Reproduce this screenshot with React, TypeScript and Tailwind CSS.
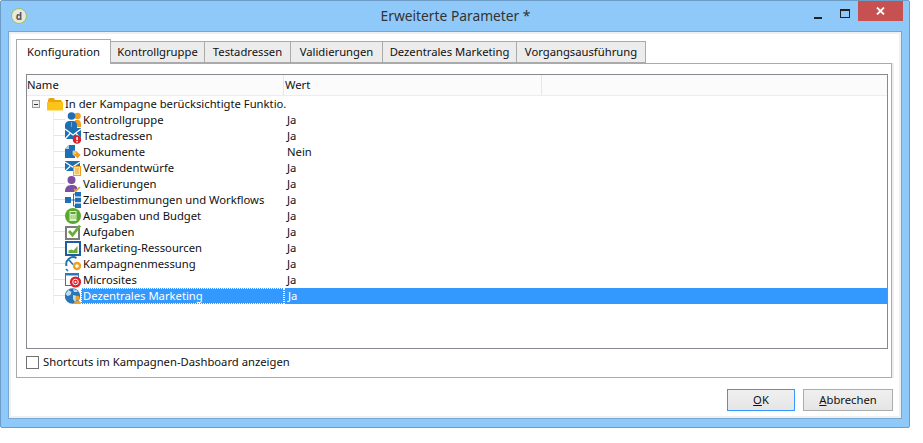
const rows = [
  { name: "Kontrollgruppe", value: "Ja", icon: "group" },
  { name: "Testadressen", value: "Ja", icon: "test" },
  { name: "Dokumente", value: "Nein", icon: "doc" },
  { name: "Versandentwürfe", value: "Ja", icon: "draft" },
  { name: "Validierungen", value: "Ja", icon: "valid" },
  { name: "Zielbestimmungen und Workflows", value: "Ja", icon: "flow" },
  { name: "Ausgaben und Budget", value: "Ja", icon: "budget" },
  { name: "Aufgaben", value: "Ja", icon: "task" },
  { name: "Marketing-Ressourcen", value: "Ja", icon: "res" },
  { name: "Kampagnenmessung", value: "Ja", icon: "gauge" },
  { name: "Microsites", value: "Ja", icon: "micro" },
  { name: "Dezentrales Marketing", value: "Ja", icon: "globe" },
];

const tabs = ["Kontrollgruppe", "Testadressen", "Validierungen", "Dezentrales Marketing", "Vorgangsausführung"];
const tabWidths = ["w-[94px]", "w-[86px]", "w-[92px]", "w-[134px]", "w-[129px]"];

function RowIcon({ type }: { type: string }) {
  const blue = "#1f6fb5";
  const orange = "#f0a020";
  return (
    <svg width="16" height="16" viewBox="0 0 16 16" className="shrink-0">
      {type === "group" && (
        <>
          <circle cx="12.500" cy="4" r="3.300" fill={orange} />
          <path d="M10 15V8h3c2 0 3 2 3 4v3z" fill={orange} />
          <circle cx="6.500" cy="4" r="3.800" fill={blue} />
          <path d="M0 16v-3c0-2 2-4 4.500-4h4c2 0 3.500 2 3.500 4v3z" fill={blue} />
          <path d="M6.500 10v5" stroke="#6aa7dc" />
        </>
      )}
      {type === "test" && (
        <>
          <rect x="0" y="0" width="16" height="11" fill={blue} />
          <path d="M0 1l8 6 8-6M0 11l5-5.500M16 11l-5-5.500" stroke="#fff" strokeWidth="1.300" fill="none" />
          <circle cx="12" cy="11.500" r="4.300" fill="#d8232a" />
          <rect x="11.300" y="9" width="1.500" height="3.200" fill="#fff" />
          <rect x="11.300" y="13" width="1.500" height="1.400" fill="#fff" />
        </>
      )}
      {type === "doc" && (
        <>
          <path d="M4 1h6v13H0V5z" fill={blue} />
          <path d="M0 5l4-4v4z" fill="#a8cbe8" />
          <path d="M8 7h3.500l4.500 4-3.500 3.500L8 10.500z" fill={orange} stroke="#fff" strokeWidth="0.600" />
          <circle cx="10" cy="9" r="0.800" fill="#fff" />
        </>
      )}
      {type === "draft" && (
        <>
          <rect x="0" y="1" width="15" height="10" fill={blue} />
          <path d="M0 2l7.500 5L15 2M0 11l5-4.500M15 11l-5-4.500" stroke="#fff" strokeWidth="1.300" fill="none" />
          <rect x="8.500" y="6.500" width="7" height="9" fill="#fbe3b4" stroke={orange} />
          <path d="M10 9h4M10 11h4M10 13h4" stroke={orange} />
        </>
      )}
      {type === "valid" && (
        <>
          <circle cx="6.500" cy="4" r="4" fill="#7b4fa3" />
          <path d="M0 16c0-4 1.500-7 6.500-7s5.500 2 6 3.500L9 16z" fill="#7b4fa3" />
          <path d="M9 13l2 2 4-4" stroke={orange} strokeWidth="1.600" fill="none" />
        </>
      )}
      {type === "flow" && (
        <>
          <rect x="0" y="5" width="6" height="6" fill={blue} />
          <path d="M6 8h3M8.500 2v12M8.500 2h2M8.500 8h2M8.500 14h2" stroke={blue} />
          <rect x="10" y="0" width="6" height="4.500" fill={blue} />
          <rect x="10" y="5.700" width="6" height="4.500" fill={blue} />
          <rect x="10" y="11.500" width="6" height="4.500" fill={blue} />
        </>
      )}
      {type === "budget" && (
        <>
          <circle cx="8" cy="8" r="8" fill="#5ba82e" />
          <rect x="4.500" y="3" width="7" height="10" fill="#d9efc8" />
          <rect x="5.500" y="4" width="5" height="2" fill="#5ba82e" />
          <path d="M5.500 8h1.200M7.500 8h1.200M9.500 8h1.200M5.500 10h1.200M7.500 10h1.200M9.500 10h1.200" stroke="#5ba82e" />
        </>
      )}
      {type === "task" && (
        <>
          <rect x="1" y="3" width="13" height="12" fill="#fff" stroke="#7d7d7d" strokeWidth="2" />
          <path d="M4 7l3.500 4L15 1.500" stroke="#68ad35" strokeWidth="2.800" fill="none" />
        </>
      )}
      {type === "res" && (
        <>
          <rect x="1" y="2" width="14" height="13" fill="#fff" stroke="#1d5e9c" strokeWidth="2" />
          <path d="M3.500 13v-2.500l3-1 2 1 4-4.500v7z" fill="#68ad35" />
        </>
      )}
      {type === "gauge" && (
        <>
          <path d="M1.500 10a7 7 0 0 1 10-8" stroke={blue} strokeWidth="2" fill="none" />
          <path d="M4 4l4 4.500" stroke={blue} strokeWidth="1.600" />
          <path d="M1 13l2 2" stroke={blue} strokeWidth="1.600" />
          <circle cx="12" cy="10" r="3" fill="#fff" stroke={orange} strokeWidth="2.400" />
        </>
      )}
      {type === "micro" && (
        <>
          <rect x="0.500" y="1.500" width="13" height="12" fill="#fff" stroke="#2f77b8" />
          <rect x="0" y="1" width="14" height="2.500" fill="#2f77b8" />
          <circle cx="10.500" cy="10" r="5.600" fill="#d8232a" />
          <circle cx="10.500" cy="10" r="2.800" fill="none" stroke="#fff" />
          <circle cx="10.500" cy="10" r="1" fill="#fff" />
        </>
      )}
      {type === "globe" && (
        <>
          <circle cx="7.500" cy="8" r="7.700" fill="#2a75b5" />
          <path d="M3.500 2l3 2-1 3-3 1-2-2zM8 7l4 1v3l-2 3-2-3zM8 1l3.500 1 1.500 2-4 0z" fill="#c3dcf0" />
          <circle cx="12.500" cy="10" r="2.200" fill={orange} />
          <path d="M9 16c0-2 1.500-3.500 3.500-3.500S16 14 16 16z" fill={orange} />
        </>
      )}
    </svg>
  );
}

export default function App() {
  return (
    <div className="w-[923px] h-[443px] bg-white overflow-hidden text-[11.25px] leading-4 text-[#111]" style={{ fontFamily: '"Noto Sans", sans-serif' }}>
      <div className="flex flex-col w-[910px] h-[428px] bg-[#8fc9f9] border border-[#6d9cc6] rounded-[2px]">
        <div className="flex items-center h-[30px] shrink-0">
          <div className="flex items-center justify-center w-4 h-4 ml-[10px] rounded-full bg-[#e8e8e0] border border-[#9cc25a] text-[10px] font-bold leading-none text-[#555]">
            d
          </div>
          <div className="flex-1 text-center text-[13.8px] text-[#333] pl-[70px]">Erweiterte Parameter *</div>
          <div className="flex items-center justify-center w-[8px] h-[20px] mr-[18px]">
            <span className="block shrink-0 w-[8px] h-[2px] mt-[3px] bg-[#222]"></span>
          </div>
          <div className="w-[10px] h-[9px] mr-[8px] mb-[6px] border border-[#222] border-t-2"></div>
          <div className="flex items-center justify-center self-start w-[45px] h-[20px] mr-[6px] bg-[#c75050] text-white">
            <svg width="9" height="8" viewBox="0 0 9 8">
              <path d="M1 0.500l7 7M8 0.500l-7 7" stroke="#fff" strokeWidth="1.800" />
            </svg>
          </div>
        </div>

        <div className="flex flex-col flex-1 mx-[7px] mb-[8px] px-[7px] pt-[7px] bg-white border border-[#77a6d0] shadow-[inset_0_0_0_2px_#f0f0f0]">
          <div className="flex items-end h-[24px] shrink-0">
            <div className="flex items-center justify-center w-[95px] h-[25px] -mb-px relative z-10 bg-white border border-[#aaa] border-b-0">Konfiguration</div>
            {tabs.map((t, i) => (
              <div key={t} className={`flex items-center justify-center h-[22px] bg-[#ececec] border border-[#aaa] border-l-0 ${tabWidths[i]}`}>
                {t}
              </div>
            ))}
          </div>

          <div className="flex flex-col w-[876px] h-[315px] pl-[9px] pr-[3px] pt-[10px] bg-white border border-[#aaa] shadow-[2px_0_0_#eee]">
            <div className="flex flex-col h-[275px] border border-[#88888f] shrink-0">
              <div className="flex h-[21px] shrink-0 items-center bg-[#fbfbfc] border-b border-[#e6eefa]">
                <div className="w-[257px] border-r border-[#e6e6ea] h-full flex items-center">Name</div>
                <div className="w-[258px] pl-[1px] border-r border-[#e6e6ea] h-full flex items-center">Wert</div>
              </div>
              <div className="flex items-center h-[16px] pl-[5px] whitespace-nowrap">
                <div className="flex items-center justify-center w-[8px] h-[8px] border border-[#999] bg-[#eee] mr-[7px]">
                  <span className="block w-[4px] h-px bg-[#333]"></span>
                </div>
                <svg width="16" height="14" viewBox="0 0 16 14" className="shrink-0 mr-[2px]">
                  <path d="M1 3l1-2h5l1 2h6l1 2H1z" fill="#e8a50c" />
                  <path d="M0 5h16v8.500H0z" fill="#fcc419" />
                </svg>
                <span>In der Kampagne berücksichtigte Funktio.</span>
              </div>
              {rows.map((r, i) => {
                const selected = i === rows.length - 1;
                return (
                  <div key={r.name} className="flex h-[16px] pl-[26px] whitespace-nowrap">
                    <div className="w-[12px] h-full shrink-0 border-l border-[#eee]">
                      <div className="h-[8px] border-b border-[#e4e4e4]"></div>
                    </div>
                    <RowIcon type={r.icon} />
                    <div className={`flex flex-1 h-full ${selected ? "bg-[#3399ff] text-white" : ""}`}>
                      <div className={`w-[203px] shrink-0 pl-[2px] ${selected ? "border border-dotted border-white pl-px leading-[14px]" : ""}`}>{r.name}</div>
                      <div className={`shrink-0 pl-[3px] ${selected ? "border-l border-dotted border-white pl-[2px]" : ""}`}>{r.value}</div>
                    </div>
                  </div>
                );
              })}
            </div>
            <div className="flex items-center h-[16px] mt-[5px] gap-[4px]">
              <div className="w-[13px] h-[13px] bg-white border border-[#707070]"></div>
              <span>Shortcuts im Kampagnen-Dashboard anzeigen</span>
            </div>
          </div>

          <div className="flex justify-end gap-[8px] mt-[11px] mr-[1px]">
            <div className="flex items-center justify-center w-[68px] h-[22px] bg-gradient-to-b from-[#f0f0f0] to-[#e5e5e5] border border-[#3399ff]">
              <span><span className="underline">O</span>K</span>
            </div>
            <div className="flex items-center justify-center w-[90px] h-[22px] bg-gradient-to-b from-[#f0f0f0] to-[#e5e5e5] border border-[#acacac]">
              <span><span className="underline">A</span>bbrechen</span>
            </div>
          </div>
        </div>
      </div>
    </div>
  );
}
